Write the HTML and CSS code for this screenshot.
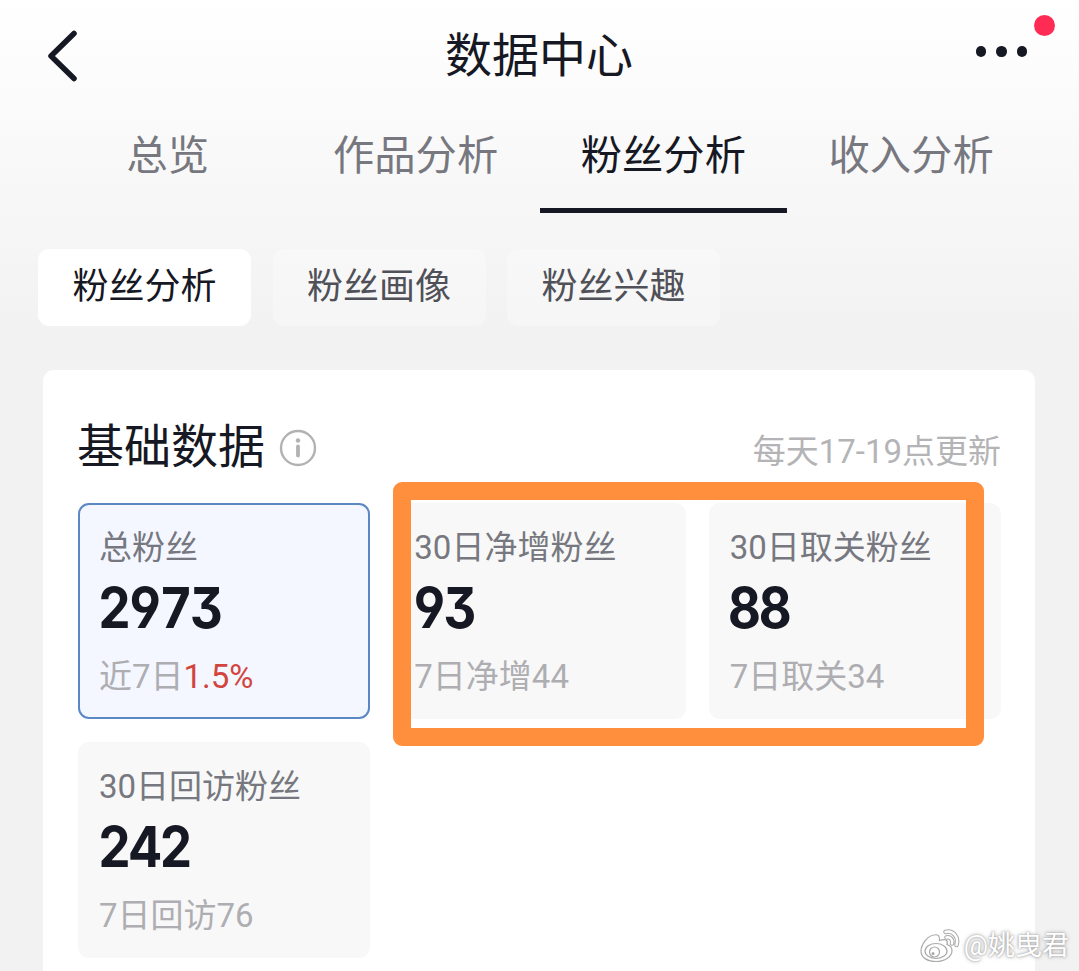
FILE: index.html
```html
<!DOCTYPE html>
<html lang="zh-CN">
<head>
  <meta charset="UTF-8">
  <title>数据中心</title>
  <link rel="stylesheet" href="styles.css">
</head>
<body>
  <header class="navbar">
    <svg class="back" viewBox="0 0 32 52">
      <path d="M27 3.500 L4 26 L27 48.500" />
    </svg>
    <h1>数据中心</h1>
    <div class="more">
      <span></span><span></span><span></span>
      <i class="badge"></i>
    </div>
  </header>

  <nav class="tabs">
    <a class="tab">总览</a>
    <a class="tab">作品分析</a>
    <a class="tab active">粉丝分析</a>
    <a class="tab">收入分析</a>
  </nav>

  <div class="pills">
    <span class="pill active">粉丝分析</span>
    <span class="pill">粉丝画像</span>
    <span class="pill">粉丝兴趣</span>
  </div>

  <main class="card">
    <div class="card-head">
      <h2>基础数据</h2>
      <svg class="info" viewBox="0 0 38 38">
        <circle cx="19" cy="19" r="17" />
        <circle class="dot" cx="19" cy="11.500" r="2.200" />
        <path d="M19 17.500 V26.500" />
      </svg>
      <span class="update">每天17-19点更新</span>
    </div>

    <div class="tiles">
      <div class="tile selected">
        <div class="label">总粉丝</div>
        <div class="num">2973</div>
        <div class="sub">近7日<b>1.5%</b></div>
      </div>
      <div class="tile">
        <div class="label">30日净增粉丝</div>
        <div class="num">93</div>
        <div class="sub">7日净增44</div>
      </div>
      <div class="tile">
        <div class="label">30日取关粉丝</div>
        <div class="num">88</div>
        <div class="sub">7日取关34</div>
      </div>
      <div class="tile">
        <div class="label">30日回访粉丝</div>
        <div class="num">242</div>
        <div class="sub">7日回访76</div>
      </div>
      <div class="highlight"></div>
    </div>
  </main>

  <div class="watermark">
    <svg viewBox="0 0 40 34">
      <path d="M14 6 C7 7 1 16 1 22 C1 29 8 32.500 16 32.500 C25 32.500 32 27.500 32 21.500 C32 18 30 16.500 27 15.500 C28.500 11 25 9.500 19.500 11.500 C20 7 18 5 14 6 Z" />
      <ellipse cx="16" cy="22" rx="11" ry="7.500" />
      <circle cx="14.500" cy="23" r="5" />
      <circle class="eye" cx="13" cy="24.500" r="1.500" />
      <path class="wave" d="M26.500 8.500 C30.500 7.500 33 11 32 14.500 M25.500 3 C33 1 39 8 36.500 16" />
      <path class="wave-in" d="M26.500 8.500 C30.500 7.500 33 11 32 14.500 M25.500 3 C33 1 39 8 36.500 16" />
    </svg>
    <span>@姚曳君</span>
  </div>
</body>
</html>
```

FILE: styles.css
```css
* { box-sizing: border-box; }
body { margin: 0; height: 971px; overflow: hidden; position: relative; font-family: Roboto, "Noto Sans CJK SC", sans-serif; color: #161823; background: #f2f2f2 linear-gradient(#ffffff, #f2f2f2) no-repeat 0 0 / 100% 330px; }
h1, h2 { margin: 0; font-weight: 400; }

.navbar { display: flex; align-items: center; justify-content: space-between; height: 108px; padding: 0 52px 0 47px; }
.navbar h1 { font-size: 47px; line-height: 60px; width: 188px; padding-top: 3px; white-space: nowrap; }
.back { width: 32px; height: 52px; margin-right: 23px; margin-top: 3px; fill: none; stroke: #161823; stroke-width: 5.5; stroke-linecap: round; stroke-linejoin: round; }
.more { position: relative; display: flex; gap: 10px; margin-top: -5px; }
.more span { width: 10.400px; height: 10.400px; border-radius: 50%; background: #161823; }
.badge { position: absolute; left: 58px; top: -31px; width: 21px; height: 21px; border-radius: 50%; background: #fe2c55; }

.tabs { display: flex; height: 105px; padding: 0 44px; }
.tab { flex: 1; text-align: center; font-size: 41.300px; line-height: 96px; color: #77787f; border-bottom: 5px solid transparent; }
.tab.active { color: #161823; border-color: #161823; }

.pills { display: flex; gap: 21.500px; margin: 36px 0 0 38px; }
.pill { width: 213px; height: 77px; border-radius: 11px; text-align: center; font-size: 36px; line-height: 76px; color: #505158; background: rgba(255, 255, 255, 0.3); }
.pill.active { color: #161823; background: #fff; }

.card { margin: 44px 44px 0 43px; height: 620px; padding: 43px 34px 0 35px; border-radius: 11px; background: #fff; }
.card-head { display: flex; align-items: center; height: 66px; }
.card-head h2 { font-size: 47px; line-height: 66px; margin-left: -1px; padding-top: 2px; }
.info { width: 38px; height: 38px; margin: 4px 0 0 14px; fill: none; stroke: #b2b2b5; stroke-width: 2.400; }
.info path { stroke-width: 3.800; stroke-linecap: round; }
.info .dot { fill: #b2b2b5; stroke: none; }
.update { margin-left: auto; margin-top: 6px; font-size: 33px; color: #b4b4b7; }

.tiles { position: relative; display: grid; grid-template-columns: repeat(3, 1fr); grid-auto-rows: 216px; gap: 23px; margin-top: 24px; }
.tile { padding: 22px 21px; border-radius: 11px; background: #f8f8f8; white-space: nowrap; }
.tile.selected { background: #f4f7ff; box-shadow: inset 0 0 0 2px #5b87c2; }
.label { font-size: 33px; line-height: 46px; color: #77787f; }
.num { margin-left: -1.500px; font-family: Inter, Roboto, sans-serif; font-weight: 650; font-size: 56px; line-height: 74px; letter-spacing: -2.400px; font-feature-settings: "tnum", "cv04", "cv09"; transform: scaleX(0.91); transform-origin: 0 50%; }
.sub { font-size: 33px; line-height: 63px; color: #aeaeb2; }
.sub b { font-weight: 400; color: #d2453f; }

/* orange marker over the second and third tile */
.highlight { position: absolute; left: 315px; top: -21px; width: 591px; height: 264px; border: 18px solid #ff8f3d; border-radius: 9px; }

.watermark { position: absolute; right: 10px; bottom: 8px; display: flex; align-items: center; gap: 4px; font-size: 27px; line-height: 34px; color: #fff; text-shadow: 0 0 2px #999, 0 0 4px #aaa; }
.watermark svg { width: 40px; height: 34px; fill: #fff; stroke: #aaa; stroke-width: 1.200; }
.watermark .eye { fill: #aaa; stroke: none; }
.watermark .wave { fill: none; stroke-width: 4.500; stroke-linecap: round; }
.watermark .wave-in { fill: none; stroke: #fff; stroke-width: 2.500; stroke-linecap: round; }
```
